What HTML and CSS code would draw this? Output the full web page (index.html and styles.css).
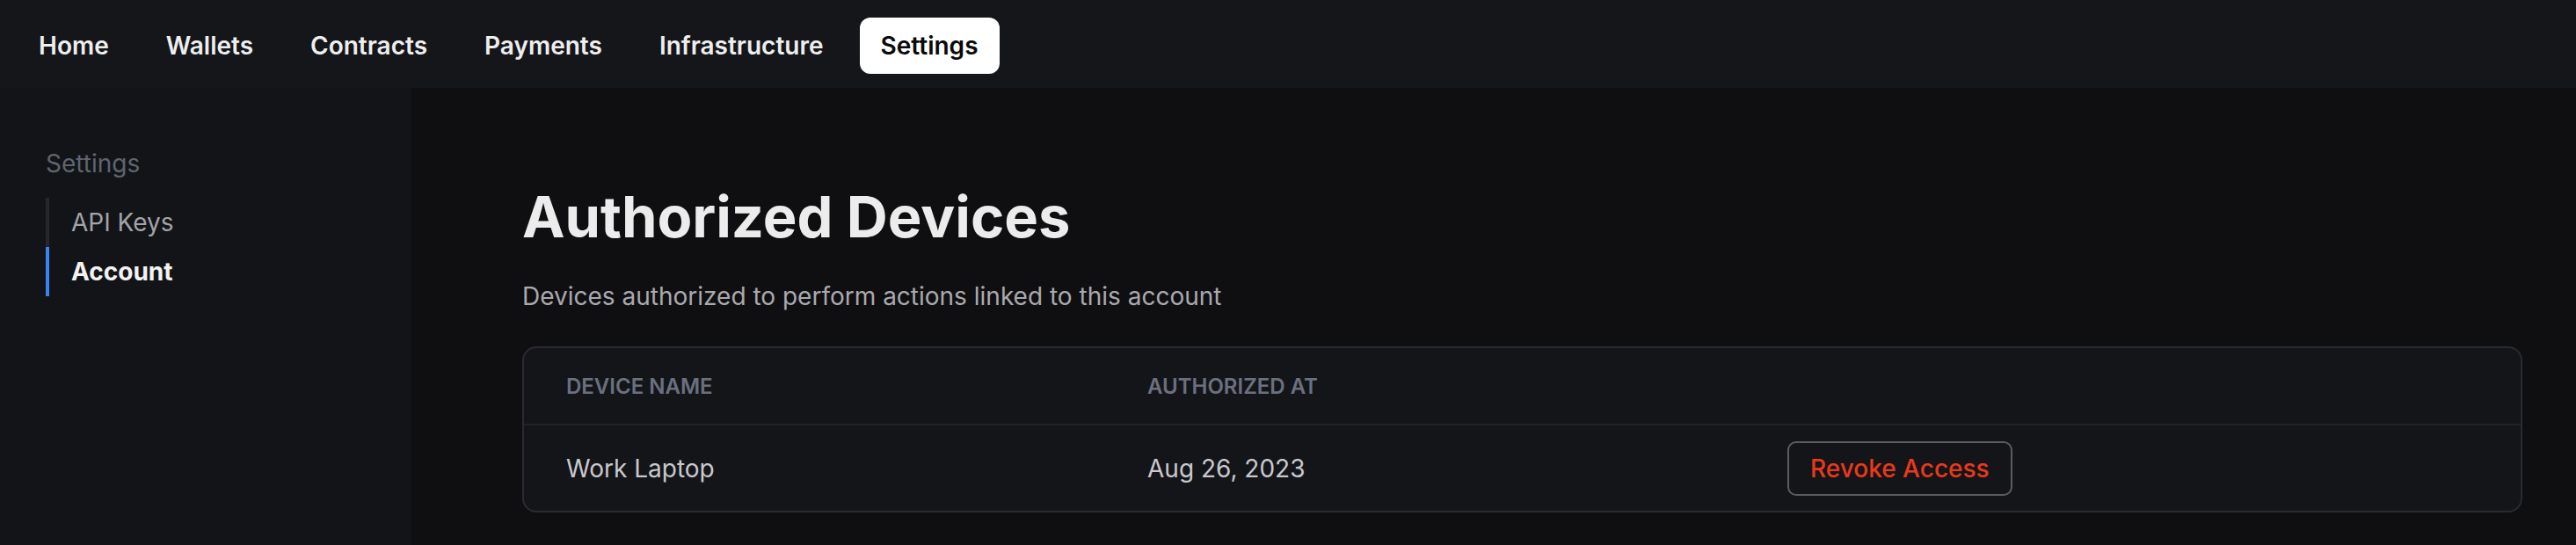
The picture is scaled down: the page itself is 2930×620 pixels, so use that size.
FILE: index.html
```html
<!DOCTYPE html>
<html lang="en">
<head>
<meta charset="utf-8">
<title>Authorized Devices</title>
<link rel="stylesheet" href="styles.css">
</head>
<body>
<div class="app">
  <nav class="topnav">
    <a class="nav-item">Home</a>
    <a class="nav-item">Wallets</a>
    <a class="nav-item">Contracts</a>
    <a class="nav-item">Payments</a>
    <a class="nav-item">Infrastructure</a>
    <a class="nav-item active">Settings</a>
  </nav>
  <div class="body">
    <aside class="sidebar">
      <div class="side-title">Settings</div>
      <ul class="side-list">
        <li class="side-item">API Keys</li>
        <li class="side-item current">Account</li>
      </ul>
    </aside>
    <main class="main">
      <h1 class="title">Authorized Devices</h1>
      <p class="subtitle">Devices authorized to perform actions linked to this account</p>
      <div class="table">
        <div class="cell head">Device Name</div>
        <div class="cell head">Authorized At</div>
        <div class="cell head"></div>
        <div class="cell data">Work Laptop</div>
        <div class="cell data">Aug 26, 2023</div>
        <div class="cell data"><button class="revoke">Revoke Access</button></div>
      </div>
    </main>
  </div>
</div>
</body>
</html>
```
FILE: styles.css
```css
* { box-sizing: border-box; }
html, body { margin: 0; padding: 0; height: 100%; }
body {
  font-family: Inter, "Noto Sans", "Liberation Sans", sans-serif;
  background: #0f0f11;
  color: #ececec;
  overflow: hidden;
}
.app { display: flex; flex-direction: column; height: 620px; }
.topnav {
  display: flex;
  align-items: center;
  gap: 17px;
  height: 100px;
  padding: 4px 20px 0 20px;
  background: #15161a;
}
.nav-item {
  font-size: 28px;
  font-weight: 600;
  line-height: 40px;
  padding: 12px 24px;
  border-radius: 12px;
  color: #eeeeee;
}
.nav-item.active { background: #ffffff; color: #0a0a0a; }
.body { display: flex; flex: 1; }
.sidebar {
  width: 468px;
  flex: none;
  background: #131418;
  padding: 66px 0 0 52px;
}
.side-title {
  font-size: 28px;
  line-height: 40px;
  color: #5f6470;
}
.side-list { list-style: none; margin: 19px 0 0 0; padding: 0; }
.side-item {
  font-size: 28px;
  line-height: 40px;
  padding: 8px 0 8px 25px;
  border-left: 4px solid #26272b;
  color: #a3a3a8;
}
.side-item.current { border-left-color: #3b82f6; color: #f2f2f2; font-weight: 700; }
.main {
  flex: 1;
  background: #0f0f11;
  padding: 107px 61px 0 126px;
}
.title {
  margin: 0;
  font-size: 65px;
  line-height: 80px;
  font-weight: 700;
  color: #ececec;
}
.subtitle {
  margin: 30px 0 0 0;
  font-size: 28px;
  line-height: 40px;
  color: #a9a9ae;
}
.table {
  margin-top: 37px;
  display: grid;
  grid-template-columns: 661px 728px 1fr;
  grid-template-rows: 88px 97px;
  background: #141519;
  border: 2px solid #2a2b30;
  border-radius: 16px;
}
.cell { display: flex; align-items: center; padding-left: 48px; }
.head {
  font-size: 24px;
  font-weight: 600;
  text-transform: uppercase;
  color: #6b7080;
  border-bottom: 2px solid #222327;
}
.data { font-size: 28px; color: #c9c9cd; }
.revoke {
  font-family: inherit;
  font-size: 28px;
  font-weight: 500;
  line-height: 40px;
  padding: 9px 24px;
  background: transparent;
  border: 2px solid #5b5b60;
  border-radius: 10px;
  color: #e8391c;
}
```
